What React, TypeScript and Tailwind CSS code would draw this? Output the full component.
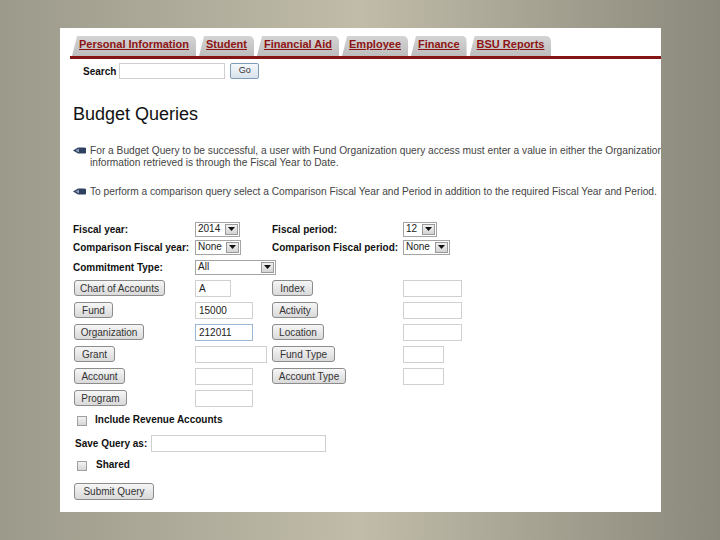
import React from "react";

const tabs = ["Personal Information", "Student", "Financial Aid", "Employee", "Finance", "BSU Reports"];

function Tab({ label }: { label: string }) {
  return (
    <div className="flex h-[20px] items-start rounded-tr-[5px] bg-gradient-to-b from-[#d4d4d4] to-[#bdbdbd] pl-[7px] pr-[7px] [clip-path:polygon(0_100%,5px_0,100%_0,100%_100%)]">
      <span className="text-[11px] font-bold text-[#8e1414] underline decoration-[#8e1414] underline-offset-[1px]">{label}</span>
    </div>
  );
}

function Btn({ label, w }: { label: string; w: string }) {
  return (
    <div className={`flex h-[16px] items-center justify-center rounded-[3px] border border-[#8c8c8c] bg-gradient-to-b from-[#f6f6f6] to-[#d9d9d9] text-[10px] text-[#333] ${w}`}>
      {label}
    </div>
  );
}

function Select({ value, w }: { value: string; w: string }) {
  return (
    <div className={`flex h-[15px] items-center border border-[#a4a4a4] bg-white font-normal ${w}`}>
      <span className="flex-1 pl-[2px] text-[10px] leading-none text-[#222]">{value}</span>
      <span className="mr-[1px] flex h-[11px] w-[13px] items-center justify-center border border-[#9a9a9a] bg-gradient-to-b from-[#f0f0f0] to-[#d4d4d4]">
        <svg width="7" height="4" viewBox="0 0 7 4"><path d="M0 0h7L3.5 4z" fill="#111" /></svg>
      </span>
    </div>
  );
}

function Field({ value, w, focus }: { value?: string; w: string; focus?: boolean }) {
  return (
    <div className={`flex h-[17px] items-center border bg-white pl-[3px] text-[10px] text-[#222] ${focus ? "border-[#9bb7d6]" : "border-[#d0d0d0]"} ${w}`}>
      {value}
    </div>
  );
}

function Bullet() {
  return (
    <svg width="13" height="7" viewBox="0 0 13 7" className="mt-[2px] shrink-0">
      <path d="M0 3.5L5 0.5h6a2 2 0 0 1 0 6H5z" fill="#2f4060" />
      <path d="M2.5 3.5L6 1.5v4z" fill="#8fa0bd" />
    </svg>
  );
}

function Check() {
  return <div className="h-[10px] w-[10px] border border-[#a0a0a0] bg-gradient-to-b from-[#f2f2f2] to-[#d6d6d6]" />;
}

const rows: [string, string, string, boolean | undefined, string | null, string, string | null][] = [
  ["Chart of Accounts", "w-[91px]", "A", undefined, "Index", "w-[41px]", "w-[59px]"],
  ["Fund", "w-[39px]", "15000", undefined, "Activity", "w-[46px]", "w-[59px]"],
  ["Organization", "w-[70px]", "212011", true, "Location", "w-[52px]", "w-[59px]"],
  ["Grant", "w-[41px]", "", undefined, "Fund Type", "w-[63px]", "w-[41px]"],
  ["Account", "w-[51px]", "", undefined, "Account Type", "w-[74px]", "w-[41px]"],
  ["Program", "w-[53px]", "", undefined, null, "", null],
];

const inputW = ["w-[36px]", "w-[58px]", "w-[58px]", "w-[72px]", "w-[58px]", "w-[58px]"];

export default function App() {
  return (
    <div className="h-[540px] w-[720px] overflow-hidden bg-gradient-to-r from-[#9c9a8b] via-[#c1bca9] to-[#8b897c] pl-[60px] pt-[28px] font-['Liberation_Sans',Arial,sans-serif]">
      <div className="h-[484px] w-[601px] overflow-hidden bg-white">
        {/* tabs */}
        <div className="ml-[10px] pt-[8px]">
          <div className="flex gap-[3px] pl-[2px]">
            {tabs.map((t) => (
              <Tab key={t} label={t} />
            ))}
          </div>
          <div className="h-[3px] bg-[#841515]" />
        </div>

        <div className="mt-[4px] flex h-[16px] items-center pl-[23px]">
          <span className="text-[10px] font-bold text-[#111]">Search</span>
          <div className="ml-[3px] h-[16px] w-[106px] border border-[#cfcfcf]" />
          <div className="ml-[5px] flex h-[16px] w-[29px] items-center justify-center rounded-[2px] border border-[#7f9db9] bg-gradient-to-b from-[#f5f8fb] to-[#d8e2ec] text-[9px] text-[#333]">
            Go
          </div>
        </div>

        <h1 className="mt-[24px] pl-[13px] text-[18px] leading-[22px] text-[#111]">Budget Queries</h1>

        <div className="mt-[20px] flex gap-[4px] pl-[13px] text-[10.2px] leading-[12px] text-[#444]">
          <Bullet />
          <div className="whitespace-nowrap">
            For a Budget Query to be successful, a user with Fund Organization query access must enter a value in either the Organization
            <br />
            information retrieved is through the Fiscal Year to Date.
          </div>
        </div>

        <div className="mt-[17px] flex gap-[4px] pl-[13px] text-[10.2px] leading-[12px] text-[#444]">
          <Bullet />
          <div className="whitespace-nowrap">
            To perform a comparison query select a Comparison Fiscal Year and Period in addition to the required Fiscal Year and Period.
          </div>
        </div>

        <div className="mt-[22px] grid grid-cols-[122px_77px_131px_1fr] pl-[13px] text-[10px] font-bold text-[#111]">
          <div className="flex h-[18px] items-center">Fiscal year:</div>
          <div className="flex h-[18px] items-center"><Select value="2014" w="w-[45px]" /></div>
          <div className="flex h-[18px] items-center">Fiscal period:</div>
          <div className="flex h-[18px] items-center"><Select value="12" w="w-[34px]" /></div>

          <div className="flex h-[18px] items-center">Comparison Fiscal year:</div>
          <div className="flex h-[18px] items-center"><Select value="None" w="w-[46px]" /></div>
          <div className="flex h-[18px] items-center">Comparison Fiscal period:</div>
          <div className="flex h-[18px] items-center"><Select value="None" w="w-[47px]" /></div>

          <div className="mt-[2px] flex h-[18px] items-center">Commitment Type:</div>
          <div className="col-span-3 mt-[2px] flex h-[18px] items-center"><Select value="All" w="w-[81px]" /></div>
        </div>

        <div className="mt-[1px] grid grid-cols-[122px_77px_131px_1fr] pl-[14px]">
          {rows.map(([label, bw, val, focus, label2, bw2, iw2], i) => (
            <React.Fragment key={label}>
              <div className="flex h-[22px] items-center"><Btn label={label} w={bw} /></div>
              <div className="-ml-[1px] flex h-[22px] items-center"><Field value={val} w={inputW[i]} focus={focus} /></div>
              <div className="-ml-[1px] flex h-[22px] items-center">{label2 && <Btn label={label2} w={bw2} />}</div>
              <div className="-ml-[1px] flex h-[22px] items-center">{iw2 && <Field w={iw2} />}</div>
            </React.Fragment>
          ))}
        </div>

        <div className="mt-[1px] flex h-[18px] items-center gap-[8px] pl-[17px]">
          <div className="mt-[4px]"><Check /></div>
          <span className="text-[10px] font-bold text-[#111]">Include Revenue Accounts</span>
        </div>

        <div className="mt-[6px] flex h-[18px] items-center pl-[15px]">
          <span className="text-[10px] font-bold text-[#111]">Save Query as:</span>
          <div className="ml-[4px] h-[17px] w-[175px] border border-[#cfcfcf]" />
        </div>

        <div className="mt-[3px] flex h-[18px] items-center gap-[9px] pl-[17px]">
          <div className="mt-[4px]"><Check /></div>
          <span className="text-[10px] font-bold text-[#111]">Shared</span>
        </div>

        <div className="mt-[10px] pl-[14px]">
          <Btn label="Submit Query" w="w-[80px] h-[17px]" />
        </div>
      </div>
    </div>
  );
}
